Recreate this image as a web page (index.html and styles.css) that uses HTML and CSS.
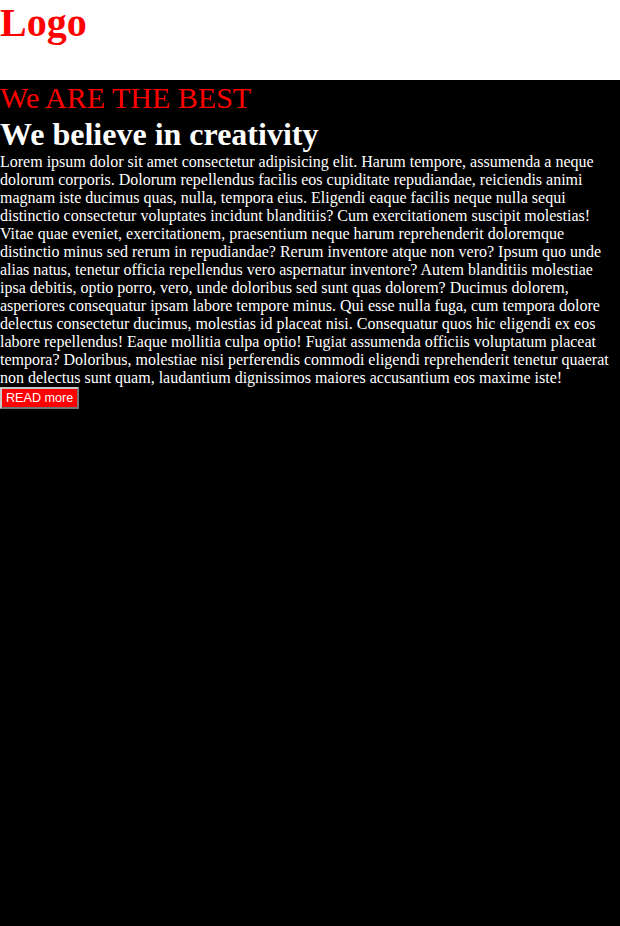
FILE: index.html
```html
<!DOCTYPE html>
<html>
<head>
<meta charset="utf-8">
<title>Logo</title>
<link rel="stylesheet" href="styles.css">
</head>
<body>
<header class="site-header">
  <h1 class="logo">Logo</h1>
</header>
<main class="hero">
  <h2 class="tagline">We ARE THE BEST</h2>
  <h1 class="title">We believe in creativity</h1>
  <p class="text">Lorem ipsum dolor sit amet consectetur adipisicing elit. Harum tempore, assumenda a neque dolorum corporis. Dolorum repellendus facilis eos cupiditate repudiandae, reiciendis animi magnam iste ducimus quas, nulla, tempora eius. Eligendi eaque facilis neque nulla sequi distinctio consectetur voluptates incidunt blanditiis? Cum exercitationem suscipit molestias! Vitae quae eveniet, exercitationem, praesentium neque harum reprehenderit doloremque distinctio minus sed rerum in repudiandae? Rerum inventore atque non vero? Ipsum quo unde alias natus, tenetur officia repellendus vero aspernatur inventore? Autem blanditiis molestiae ipsa debitis, optio porro, vero, unde doloribus sed sunt quas dolorem? Ducimus dolorem, asperiores consequatur ipsam labore tempore minus. Qui esse nulla fuga, cum tempora dolore delectus consectetur ducimus, molestias id placeat nisi. Consequatur quos hic eligendi ex eos labore repellendus! Eaque mollitia culpa optio! Fugiat assumenda officiis voluptatum placeat tempora? Doloribus, molestiae nisi perferendis commodi eligendi reprehenderit tenetur quaerat non delectus sunt quam, laudantium dignissimos maiores accusantium eos maxime iste!</p>
  <button class="btn">READ more</button>
</main>
</body>
</html>
```
FILE: styles.css
```css
html, body {
  margin: 0;
  padding: 0;
}
body {
  background: #000;
  font-family: "Liberation Serif", "Times New Roman", serif;
  color: #fff;
}
.site-header {
  background: #fff;
  height: 80px;
}
.logo {
  margin: 0;
  color: #f00;
  font-size: 40px;
  line-height: 46px;
  font-weight: bold;
}
.hero {
  background: #000;
}
.tagline {
  margin: 0;
  color: #f00;
  font-size: 30px;
  line-height: 35px;
  font-weight: normal;
}
.title {
  margin: 0;
  color: #fff;
  font-size: 32px;
  line-height: 38px;
  font-weight: bold;
}
.text {
  margin: 0;
  font-size: 16px;
  line-height: 18px;
}
.btn {
  display: block;
  background: #f00;
  color: #fff;
  font-family: "Liberation Sans", Arial, sans-serif;
  font-size: 12.6px;
  line-height: 16px;
  padding: 1px 4px;
  border: 2px outset #c8c8c8;
  margin: 0;
}
```
